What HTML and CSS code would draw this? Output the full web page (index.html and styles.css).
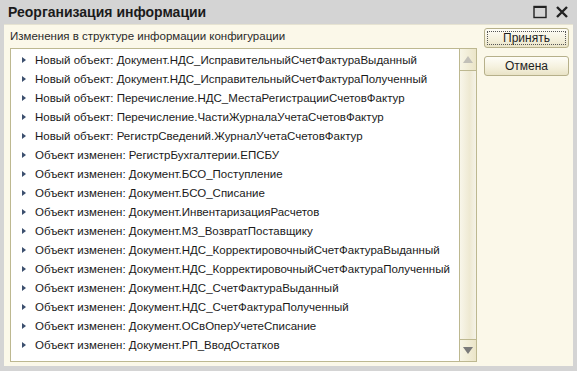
FILE: index.html
```html
<!DOCTYPE html>
<html lang="ru">
<head>
    <meta charset="UTF-8">
    <title>Реорганизация информации</title>
    <link rel="stylesheet" href="styles.css">
</head>
<body>
    <div class="window">
        <header class="titlebar">
            <h1 class="title">Реорганизация информации</h1>
            <div class="title-btns">
                <svg class="title-icon" width="14" height="14" viewBox="0 0 14 14">
                    <rect x="1" y="1.5" width="12" height="11" fill="none" stroke="#222" stroke-width="1.4"/>
                    <line x1="1" y1="2" x2="13" y2="2" stroke="#222" stroke-width="2"/>
                </svg>
                <svg class="title-icon" width="14" height="14" viewBox="0 0 14 14">
                    <path d="M2 2 L12 12 M12 2 L2 12" stroke="#222" stroke-width="2.4"/>
                </svg>
            </div>
        </header>
        <div class="content">
            <div class="main">
                <div class="caption">Изменения в структуре информации конфигурации</div>
                <div class="listbox">
                    <ul class="items" id="items"></ul>
                    <div class="scrollbar">
                        <div class="sb-btn"><span class="arrow-up"></span></div>
                        <div class="sb-track"></div>
                        <div class="sb-btn sb-btn-down"><span class="arrow-down"></span></div>
                    </div>
                </div>
            </div>
            <div class="buttons">
                <button class="btn btn-default"><span>Принять</span></button>
                <button class="btn"><span>Отмена</span></button>
            </div>
        </div>
    </div>
    <script>
        const rows = [
            "Новый объект: Документ.НДС_ИсправительныйСчетФактураВыданный",
            "Новый объект: Документ.НДС_ИсправительныйСчетФактураПолученный",
            "Новый объект: Перечисление.НДС_МестаРегистрацииСчетовФактур",
            "Новый объект: Перечисление.ЧастиЖурналаУчетаСчетовФактур",
            "Новый объект: РегистрСведений.ЖурналУчетаСчетовФактур",
            "Объект изменен: РегистрБухгалтерии.ЕПСБУ",
            "Объект изменен: Документ.БСО_Поступление",
            "Объект изменен: Документ.БСО_Списание",
            "Объект изменен: Документ.ИнвентаризацияРасчетов",
            "Объект изменен: Документ.МЗ_ВозвратПоставщику",
            "Объект изменен: Документ.НДС_КорректировочныйСчетФактураВыданный",
            "Объект изменен: Документ.НДС_КорректировочныйСчетФактураПолученный",
            "Объект изменен: Документ.НДС_СчетФактураВыданный",
            "Объект изменен: Документ.НДС_СчетФактураПолученный",
            "Объект изменен: Документ.ОСвОперУчетеСписание",
            "Объект изменен: Документ.РП_ВводОстатков"
        ];
        const list = document.getElementById("items");
        rows.forEach(text => {
            const li = document.createElement("li");
            li.className = "item";
            li.innerHTML = '<span class="tri"></span>' + text;
            list.appendChild(li);
        });
    </script>
</body>
</html>
```

FILE: styles.css
```css
html, body {
    margin: 0;
    padding: 0;
    background-color: #c9c9c9;
}
.window {
    width: 577px;
    height: 371px;
    display: flex;
    flex-direction: column;
    box-sizing: border-box;
    background-color: #d4d4d4;
    padding: 0 4px 5px 4px;
    font-family: "Liberation Sans", Arial, sans-serif;
    font-size: 11.5px;
    color: #000;
}
.titlebar {
    height: 24px;
    display: flex;
    align-items: center;
    justify-content: space-between;
}
.title {
    margin: 0 0 0 4px;
    font-size: 14px;
    font-weight: bold;
    color: #1b1b1b;
}
.title-btns {
    display: flex;
    gap: 8px;
    margin-right: 4px;
}
.content {
    flex: 1;
    display: flex;
    background-color: #fbf8e9;
    border-top: 1px solid #e6e3d2;
    padding: 0 4px 4px 6px;
}
.main {
    display: flex;
    flex-direction: column;
    width: 468px;
}
.caption {
    height: 23px;
    line-height: 23px;
    color: #2a2a2a;
}
.listbox {
    flex: 1;
    display: flex;
    background-color: #fff;
    border: 1px solid #bdb890;
}
.items {
    flex: 1;
    list-style: none;
    margin: 0;
    padding: 2px 0 0 0;
}
.item {
    height: 19px;
    line-height: 19px;
    padding-left: 11px;
    color: #1a1a1a;
    white-space: nowrap;
}
.tri {
    display: inline-block;
    width: 0;
    height: 0;
    border-top: 3.5px solid transparent;
    border-bottom: 3.5px solid transparent;
    border-left: 4px solid #3c4f6e;
    margin-right: 9px;
    vertical-align: 1px;
}
.scrollbar {
    width: 16px;
    display: flex;
    flex-direction: column;
    border-left: 1px solid #bdb890;
    background-color: #f6f4ee;
}
.sb-btn {
    height: 21px;
    display: flex;
    align-items: center;
    justify-content: center;
    background: linear-gradient(to right, #f7f5e6, #ebe5c8);
    border-bottom: 1px solid #bdb890;
}
.sb-btn-down {
    border-bottom: none;
    border-top: 1px solid #bdb890;
}
.sb-track {
    flex: 1;
    background: linear-gradient(to right, #f8f6ea, #eee9d2 60%, #f5f3e8);
}
.arrow-up {
    width: 0;
    height: 0;
    border-left: 5px solid transparent;
    border-right: 5px solid transparent;
    border-bottom: 7px solid #c2c0b8;
}
.arrow-down {
    width: 0;
    height: 0;
    border-left: 5px solid transparent;
    border-right: 5px solid transparent;
    border-top: 7px solid #7a7a7a;
}
.buttons {
    display: flex;
    flex-direction: column;
    gap: 8px;
    margin-left: 7px;
    padding-top: 3px;
}
.btn {
    width: 85px;
    height: 20px;
    padding: 2px;
    font-family: "Liberation Sans", Arial, sans-serif;
    font-size: 12px;
    color: #1e1e1e;
    border: 1px solid #b6b08a;
    border-radius: 3px;
    background: linear-gradient(to bottom, #fefdf7, #f4f0dc 60%, #e9e3c6);
    display: flex;
}
.btn span {
    flex: 1;
    display: flex;
    align-items: center;
    justify-content: center;
    border: 1px solid transparent;
}
.btn-default span {
    border: 1px dotted #555;
}
```
